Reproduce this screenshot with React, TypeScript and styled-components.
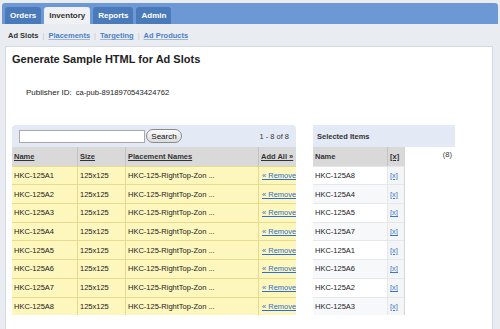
import React from "react";
import styled, { createGlobalStyle } from "styled-components";

const Global = createGlobalStyle`
  html, body { margin: 0; padding: 0; }
  body {
    background: #e9ecf1;
    font-family: "Liberation Sans", Arial, Helvetica, sans-serif;
    color: #222;
    width: 500px;
    height: 329px;
    overflow: hidden;
  }
`;

const Page = styled.div`
  padding: 3px 2px 0 2px;
`;

const TabBar = styled.div`
  display: flex;
  align-items: flex-end;
  gap: 3px;
  height: 21px;
  padding: 0 3px;
  background: #6c99d5;
  border-radius: 3px 3px 0 0;
  box-sizing: border-box;
`;

const Tab = styled.div<{ $active?: boolean }>`
  height: 17px;
  padding: 0 5px;
  display: flex;
  align-items: center;
  font-size: 8px;
  font-weight: bold;
  border-radius: 3px 3px 0 0;
  background: ${(p) => (p.$active ? "#eff1f4" : "#4b7aba")};
  color: ${(p) => (p.$active ? "#333" : "#fff")};
`;

const SubNav = styled.div`
  display: flex;
  align-items: center;
  gap: 4px;
  height: 17px;
  padding: 3px 0 0 6px;
  box-sizing: content-box;
  font-size: 7.5px;
  font-weight: bold;
`;

const SubCurrent = styled.span`
  color: #333;
`;

const SubLink = styled.a`
  color: #4d7fc7;
  text-decoration: underline;
  text-decoration-color: #9db7dd;
`;

const Sep = styled.span`
  color: #c2c8d2;
  font-weight: normal;
`;

const Panel = styled.div`
  margin: 2px 5px 0 3px;
  background: #fff;
  border: 1px solid #d4d8e0;
  border-bottom: none;
  height: 290px;
  padding: 0 6px;
`;

const Heading = styled.h1`
  margin: 5px 0 0 0;
  font-size: 11px;
  line-height: 14px;
  font-weight: bold;
  color: #222;
`;

const PubRow = styled.div`
  display: flex;
  align-items: center;
  gap: 4px;
  margin: 20px 0 0 14px;
  font-size: 8px;
  line-height: 11px;
  color: #222;
`;

const PubValue = styled.span`
  font-size: 7.6px;
  padding-top: 1px;
`;

const Tables = styled.div`
  display: flex;
  align-items: flex-start;
  gap: 17px;
  margin-top: 27px;
`;

const LeftBox = styled.div`
  width: 284px;
`;

const BoxHead = styled.div`
  display: flex;
  align-items: center;
  height: 22px;
  background: #e3eaf6;
  border-radius: 4px 4px 0 0;
  box-sizing: border-box;
`;

const SearchHead = styled(BoxHead)`
  padding: 0 7px;
`;

const SearchInput = styled.input`
  width: 126px;
  height: 13px;
  box-sizing: border-box;
  border: 1px solid #a9a9a9;
  background: #fff;
  padding: 0;
  margin: 0;
`;

const SearchButton = styled.button`
  height: 14px;
  width: 36px;
  margin: 0 0 0 1px;
  padding: 0;
  border: 1px solid #8a8a8a;
  border-radius: 7px;
  background: linear-gradient(#fbfbfb, #dcdcdc);
  font-family: "Liberation Sans", Arial, sans-serif;
  font-size: 8px;
  color: #111;
`;

const Count = styled.span`
  margin-left: auto;
  font-size: 7.5px;
  color: #333;
`;

const Grid = styled.div<{ $cols: string }>`
  display: grid;
  grid-template-columns: ${(p) => p.$cols};
`;

const HeadCell = styled.div<{ $rule?: boolean; $plain?: boolean }>`
  height: 18.7px;
  box-sizing: border-box;
  display: flex;
  align-items: center;
  padding-left: 2px;
  background: #d9d9d9;
  font-size: 7.5px;
  font-weight: bold;
  color: #333;
  text-decoration: ${(p) => (p.$plain ? "none" : "underline")};
  border-left: ${(p) => (p.$rule ? "1px solid #c4c4c4" : "none")};
`;

const Cell = styled.div<{ $rule?: boolean; $bg: string; $line: string }>`
  height: 18.7px;
  box-sizing: border-box;
  display: flex;
  align-items: center;
  padding-left: 2px;
  background: ${(p) => p.$bg};
  border-top: 1px solid ${(p) => p.$line};
  border-left: ${(p) => (p.$rule ? `1px solid ${p.$line}` : "none")};
  font-size: 7.5px;
  color: #222;
  white-space: nowrap;
  overflow: hidden;
`;

const RemoveLink = styled.a`
  color: #2f6fd0;
  text-decoration: underline;
  padding-left: 1px;
`;

const RightBox = styled.div`
  width: 142px;
`;

const SelHead = styled(BoxHead)`
  padding-left: 4px;
  font-size: 7.5px;
  font-weight: bold;
  color: #333;
  border-radius: 0;
`;

const SelBody = styled.div`
  display: flex;
  align-items: flex-start;
`;

const SelTable = styled(Grid)`
  width: 91px;
  border-right: 1px solid #d6d6d6;
`;

const XLink = styled.a`
  color: #3a74cf;
  text-decoration: underline;
  font-size: 7.5px;
`;

const SelCount = styled.span`
  margin-left: auto;
  padding: 3px 3px 0 0;
  font-size: 7.5px;
  color: #333;
`;

const slots = ["A1", "A2", "A3", "A4", "A5", "A6", "A7", "A8"];
const selected = ["A8", "A4", "A5", "A7", "A1", "A6", "A2", "A3"];

const Y_BG = "#fdf6bd";
const Y_LINE = "#e6da8c";

export default function App() {
  return (
    <>
      <Global />
      <Page>
        <TabBar>
          <Tab>Orders</Tab>
          <Tab $active>Inventory</Tab>
          <Tab>Reports</Tab>
          <Tab>Admin</Tab>
        </TabBar>
        <SubNav>
          <SubCurrent>Ad Slots</SubCurrent>
          <Sep>|</Sep>
          <SubLink>Placements</SubLink>
          <Sep>|</Sep>
          <SubLink>Targeting</SubLink>
          <Sep>|</Sep>
          <SubLink>Ad Products</SubLink>
        </SubNav>
        <Panel>
          <Heading>Generate Sample HTML for Ad Slots</Heading>
          <PubRow>
            <span>Publisher ID:</span>
            <PubValue>ca-pub-8918970543424762</PubValue>
          </PubRow>
          <Tables>
            <LeftBox>
              <SearchHead>
                <SearchInput />
                <SearchButton>Search</SearchButton>
                <Count>1 - 8 of 8</Count>
              </SearchHead>
              <Grid $cols="65px 48px 133px 38px">
                <HeadCell>Name</HeadCell>
                <HeadCell $rule>Size</HeadCell>
                <HeadCell $rule>Placement Names</HeadCell>
                <HeadCell $rule>Add All »</HeadCell>
                {slots.map((s) => (
                  <React.Fragment key={s}>
                    <Cell $bg={Y_BG} $line={Y_LINE}>HKC-125{s}</Cell>
                    <Cell $bg={Y_BG} $line={Y_LINE} $rule>125x125</Cell>
                    <Cell $bg={Y_BG} $line={Y_LINE} $rule>HKC-125-RightTop-Zon ...</Cell>
                    <Cell $bg={Y_BG} $line={Y_LINE} $rule>
                      <RemoveLink>« Remove</RemoveLink>
                    </Cell>
                  </React.Fragment>
                ))}
              </Grid>
            </LeftBox>
            <RightBox>
              <SelHead>Selected Items</SelHead>
              <SelBody>
                <SelTable $cols="74px 17px">
                  <HeadCell $plain>Name</HeadCell>
                  <HeadCell $rule>[x]</HeadCell>
                  {selected.map((s, i) => {
                    const bg = i % 2 === 0 ? "#ffffff" : "#f7f8fa";
                    return (
                      <React.Fragment key={s}>
                        <Cell $bg={bg} $line="#e6e7ea">HKC-125{s}</Cell>
                        <Cell $bg="#f4f5f7" $line="#e6e7ea" $rule>
                          <XLink>[x]</XLink>
                        </Cell>
                      </React.Fragment>
                    );
                  })}
                </SelTable>
                <SelCount>(8)</SelCount>
              </SelBody>
            </RightBox>
          </Tables>
        </Panel>
      </Page>
    </>
  );
}
